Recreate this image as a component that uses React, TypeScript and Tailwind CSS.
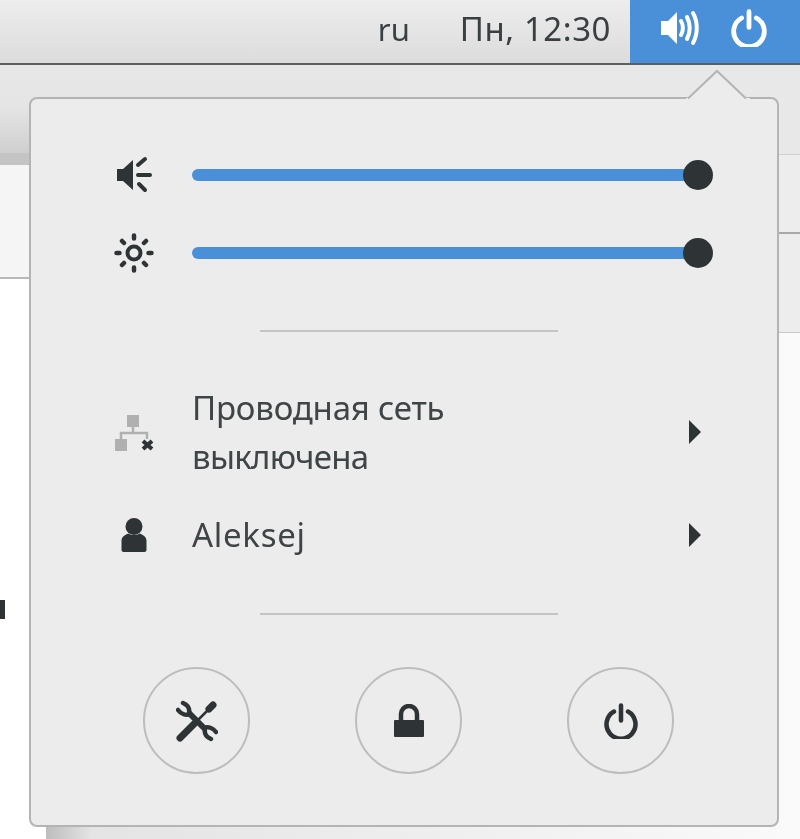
const ink = '#2e3436';

function Slider({ icon }: { icon: React.ReactNode }) {
  return (
    <div className="flex items-center h-[40px]">
      <div className="w-[42px] h-[40px] ml-[82px] flex items-center justify-center">{icon}</div>
      <div className="relative ml-[37px] w-[520px] h-[12px] rounded-full bg-[#4a90d9]">
        <div className="absolute right-[-1px] top-[-9px] w-[30px] h-[30px] rounded-full bg-[#2e3436]" />
      </div>
    </div>
  );
}

function Arrow() {
  return <div className="w-0 h-0 border-y-[12.5px] border-y-transparent border-l-[12px] border-l-[#2e3436]" />;
}

function RoundButton({ children }: { children: React.ReactNode }) {
  return (
    <div className="w-[107px] h-[107px] rounded-full border-2 border-[#bdbdbd] flex items-center justify-center">
      {children}
    </div>
  );
}

function PowerIcon({ color, size }: { color: string; size: number }) {
  return (
    <svg width={size} height={size} viewBox="0 0 36 36" fill="none" stroke={color} strokeWidth="4.500" strokeLinecap="round">
      <path d="M11 8.500a14.500 14.500 0 1 0 14 0" />
      <path d="M18 2.500v15" />
    </svg>
  );
}

export default function App() {
  return (
    <div className="relative w-[800px] h-[839px] overflow-hidden bg-white text-[#2e3436] font-['Noto_Sans','Liberation_Sans',sans-serif] blur-[0.7px]">
      {/* top panel */}
      <div className="flex items-start justify-end h-[65px] border-b-2 border-[#5e5e5e] bg-gradient-to-b from-[#ededed] to-[#dcdcdc]">
        <span className="text-[31px] leading-[58px] mr-[50px] text-[#3a3f41]">ru</span>
        <span className="text-[33px] leading-[58px] tracking-[0.55px] mr-[19px] text-[#3a3f41]">Пн, 12:30</span>
        <div className="flex items-center w-[170px] h-[63px] pb-[7px] bg-[#4a90d9]">
          <svg className="ml-[31px]" width="38" height="36" viewBox="0 0 38 36" fill="#fff" stroke="none">
            <path d="M0 11h7l9-9v32l-9-9H0z" />
            <path d="M20 11c2.500 4 2.500 10 0 14" fill="none" stroke="#fff" strokeWidth="4" strokeLinecap="round" />
            <path d="M26 7c3.500 7 3.500 15 0 22" fill="none" stroke="#fff" strokeWidth="4" strokeLinecap="round" />
            <path d="M32 3c5 9 5 21 0 30" fill="none" stroke="#fff" strokeWidth="4" strokeLinecap="round" />
          </svg>
          <div className="ml-[31px]">
            <PowerIcon color="#ffffff" size={38} />
          </div>
        </div>
      </div>

      {/* window behind the menu */}
      <div className="flex">
        <div className="w-[400px]">
          <div className="h-[88px] bg-gradient-to-b from-[#e8e8e8] via-[#e4e4e4] to-[#cfcfcf]" />
          <div className="h-[12px] bg-[#c4c4c4]" />
          <div className="h-[114px] bg-[#f5f5f5] border-b-2 border-[#b8b8b8]" />
          <div className="relative h-[560px] bg-white">
            <div className="absolute left-0 top-[321px] w-[5px] h-[19px] bg-[#2e3436]" />
          </div>
        </div>
        <div className="w-[400px]">
          <div className="h-[90px] bg-[#e8e8e8] border-b border-[#d0d0d0]" />
          <div className="h-[79px] bg-[#ededed] border-b-2 border-[#a8a8a8]" />
          <div className="h-[99px] bg-[#ededed] border-b border-[#c8c8c8]" />
          <div className="h-[506px] bg-[#fafafa]" />
        </div>
      </div>

      {/* menu */}
      <div className="absolute left-[29px] top-[97px] w-[750px] h-[730px] rounded-[8px] border-[2px] border-[#b4b4b4] bg-[#ececec] pt-[56px]">
        <Slider
          icon={
            <svg width="36" height="38" viewBox="0 0 36 38" fill="none" stroke={ink} strokeWidth="4" strokeLinecap="round">
              <path d="M1 13h6l10-9v30l-10-9H1z" fill={ink} stroke="none" />
              <path d="M22 9l7-6M22 19h12M23 28l6 6" />
            </svg>
          }
        />
        <div className="h-[38px]" />
        <Slider
          icon={
            <svg width="40" height="40" viewBox="0 0 40 40" fill="none" stroke={ink} strokeWidth="4.500" strokeLinecap="round">
              <circle cx="20" cy="20" r="6.500" strokeWidth="4" />
              <path d="M20 2.500v3M20 34.500v3M2.500 20h3M34.500 20h3M8 8l2 2M30 30l2 2M8 32l2-2M30 10l2-2" />
            </svg>
          }
        />

        <div className="ml-[229px] mt-[57px] w-[298px] h-[2px] bg-[#c4c4c4]" />

        <div className="flex items-center mt-[51px] h-[98px]">
          <div className="w-[42px] ml-[82px] flex justify-center">
            <svg width="42" height="40" viewBox="0 0 42 40">
              <path d="M20 14v7M8 27v-6h26v6" fill="none" stroke="#b0b0b0" strokeWidth="2.500" />
              <rect x="14" y="3" width="12" height="12" fill="#b0b0b0" />
              <rect x="2" y="27" width="12" height="12" fill="#b0b0b0" />
              <path d="M30 29l9 8M39 29l-9 8" stroke={ink} strokeWidth="4" />
            </svg>
          </div>
          <div className="ml-[37px] text-[33px] leading-[49px] text-[#3f4446]">
            <div className="tracking-[-0.2px]">Проводная сеть</div>
            <div className="tracking-[-0.7px]">выключена</div>
          </div>
          <div className="ml-auto mr-[76px]">
            <Arrow />
          </div>
        </div>

        <div className="flex items-center mt-[29px] h-[50px]">
          <div className="w-[42px] ml-[82px] flex justify-center">
            <svg width="26" height="34" viewBox="0 0 26 34" fill={ink}>
              <circle cx="13" cy="8.500" r="8.500" />
              <path d="M0.500 32V23c0-4 3-6 7-7.500 3 2 8 2 11 0 4 1.500 7 3.500 7 7.500v9c0 1-1 2-2 2H2.500c-1 0-2-1-2-2z" />
            </svg>
          </div>
          <div className="ml-[37px] text-[33px] leading-[50px] tracking-[0.7px] text-[#3f4446]">Aleksej</div>
          <div className="ml-auto mr-[76px]">
            <Arrow />
          </div>
        </div>

        <div className="ml-[229px] mt-[53px] w-[298px] h-[2px] bg-[#c4c4c4]" />

        <div className="flex ml-[112px] mt-[52px] gap-[105px]">
          <RoundButton>
            <svg width="42" height="42" viewBox="0 0 42 42" fill="none" stroke={ink} strokeLinecap="round">
              <path d="M4 38 18 24" strokeWidth="7" />
              <path d="M18 24 32 10" strokeWidth="2.500" />
              <path d="M33 9l4-4" strokeWidth="7" />
              <path d="M14 14 28 28" strokeWidth="6" />
              <path d="M2 10c3 4 8 6 12 4M13 14c1-5-1-9-6-11" strokeWidth="4.500" />
              <path d="M40 32c-3-4-8-6-12-4M29 28c-1 5 1 9 6 11" strokeWidth="4.500" />
            </svg>
          </RoundButton>
          <RoundButton>
            <svg width="30" height="34" viewBox="0 0 30 34" fill={ink}>
              <path d="M7 17V10a8 8 0 0 1 16 0v7" fill="none" stroke={ink} strokeWidth="4.500" />
              <rect x="0" y="16" width="30" height="17" rx="1" />
            </svg>
          </RoundButton>
          <RoundButton>
            <PowerIcon color={ink} size={36} />
          </RoundButton>
        </div>
      </div>

      {/* menu arrow, sits over the menu's top border */}
      <svg className="absolute left-[686px] top-[69px]" width="64" height="32" viewBox="0 0 64 32">
        <path d="M0 32V29H2L31 1.500 60 29h4v3z" fill="#ececec" stroke="none" />
        <path d="M2 29.500 31 2l29 27.500" fill="none" stroke="#b4b4b4" strokeWidth="2" />
      </svg>

      {/* stub of a window below the menu */}
      <div className="absolute left-[46px] top-[827px] w-[754px] h-[12px] bg-gradient-to-r from-[#bdbdbd] via-[#e4e4e4] via-[6%] to-[#fafafa]" />
    </div>
  );
}
